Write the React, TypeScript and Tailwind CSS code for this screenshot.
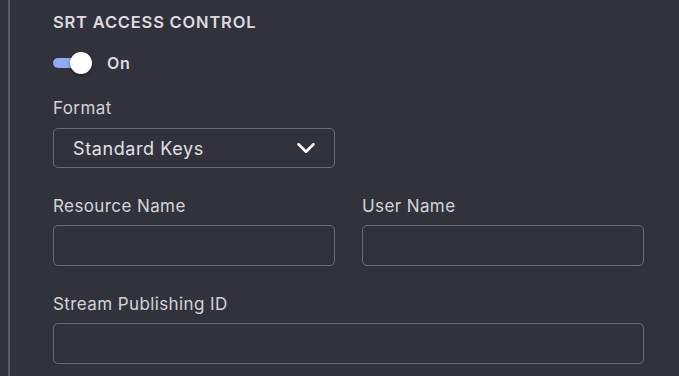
import { ChevronDown } from 'lucide-react';

const Field = ({ label, className = '' }: { label: string; className?: string }) => (
  <div className={`flex flex-col ${className}`}>
    <label className="text-[17px] leading-[20px] tracking-[0.4px] text-[#d4d4d8]">{label}</label>
    <input
      type="text"
      className="mt-[9px] h-[41px] w-full rounded-[5px] border border-[#6b6b7b] bg-transparent px-3 text-[16px] text-[#e4e4e7] outline-none"
    />
  </div>
);

const App = () => {
  return (
    <div
      className="flex h-[376px] w-[679px] overflow-hidden bg-[#32323c]"
      style={{ fontFamily: 'Inter, "Open Sans", sans-serif' }}
    >
      {/* left rule */}
      <div className="ml-[8px] w-[2px] bg-[#5b5b6b]" />

      <div className="flex w-[591px] flex-col pl-[43px] pt-[12px]">
        <h2 className="text-[16.5px] font-semibold uppercase leading-[20px] tracking-[0.8px] text-[#dcdce0]">
          SRT Access Control
        </h2>

        {/* toggle */}
        <div className="mt-[19px] flex items-center">
          <div className="relative h-[22px] w-[40px]">
            <div className="absolute left-0 top-[6px] h-[10px] w-[38px] rounded-full bg-[#8fabf2]" />
            <div className="absolute left-[17px] top-0 h-[22px] w-[22px] rounded-full bg-white shadow-[0_1px_3px_rgba(0,0,0,0.5)]" />
          </div>
          <span className="ml-[14px] text-[16px] font-semibold tracking-[0.6px] text-[#dcdce0]">On</span>
        </div>

        {/* format */}
        <label className="mt-[23px] text-[17px] leading-[20px] tracking-[0.4px] text-[#d4d4d8]">Format</label>
        <div className="mt-[10px] flex h-[40px] w-[282px] items-center justify-between rounded-[5px] border border-[#6b6b7b] pl-[19px] pr-[13px]">
          <span className="text-[18px] tracking-[0.6px] text-[#e0e0e4]">Standard Keys</span>
          <ChevronDown className="h-[30px] w-[30px] text-white" strokeWidth={2} />
        </div>

        <div className="mt-[28px] grid grid-cols-[282px_282px] gap-x-[27px]">
          <Field label="Resource Name" />
          <Field label="User Name" />
        </div>

        <Field label="Stream Publishing ID" className="mt-[28px] w-[591px]" />
      </div>
    </div>
  );
};

export default App;
